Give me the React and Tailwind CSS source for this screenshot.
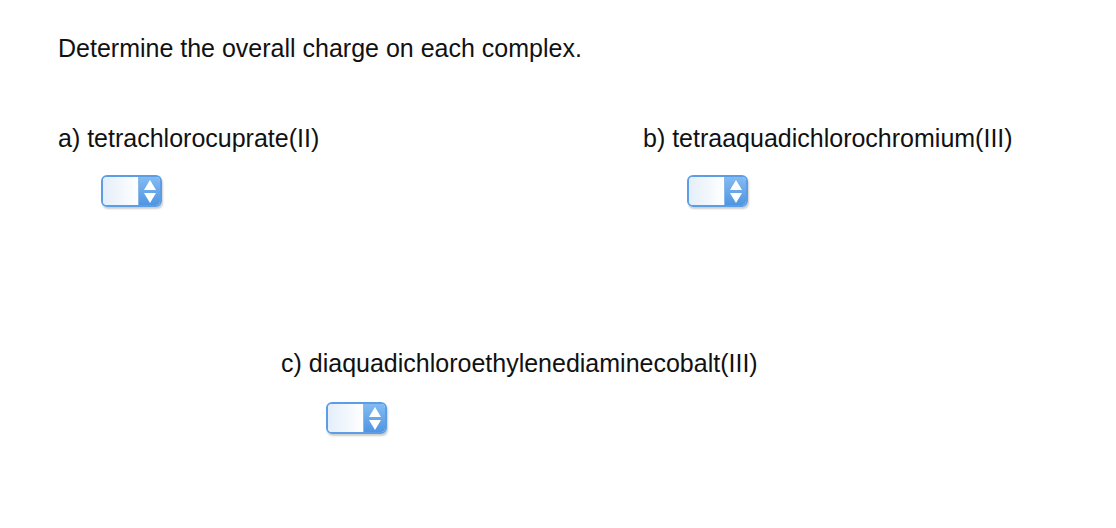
import React from "react";

function Spinner() {
  return (
    <div className="flex h-[32px] w-[61px] overflow-hidden rounded-[6px] border-2 border-[#5c9ee6] shadow-[1px_2px_2px_rgba(0,0,0,0.2)]">
      <div className="flex-1 bg-gradient-to-r from-[#e4eefa] to-white border-r border-[#8bb9ea]" />
      <div className="flex w-[21px] flex-col items-center justify-center gap-[3px] bg-gradient-to-b from-[#84bbf2] to-[#4f95e2]">
        <svg width="12" height="10" viewBox="0 0 12 10"><polygon points="6,0 12,10 0,10" fill="#fff" /></svg>
        <svg width="12" height="10" viewBox="0 0 12 10"><polygon points="0,0 12,0 6,10" fill="#fff" /></svg>
      </div>
    </div>
  );
}

export default function App() {
  return (
    <div
      className="min-h-[528px] w-[1116px] bg-white pt-[33px] pl-[58px] text-[25px] leading-[30px] text-[#111]"
      style={{ fontFamily: '"Liberation Sans", Arial, sans-serif' }}
    >
      <div>Determine the overall charge on each complex.</div>
      <div className="mt-[60px] flex">
        <div className="w-[585px]">
          <div>a) tetrachlorocuprate(II)</div>
          <div className="mt-[22px] ml-[43px]">
            <Spinner />
          </div>
        </div>
        <div>
          <div>b) tetraaquadichlorochromium(III)</div>
          <div className="mt-[22px] ml-[44px]">
            <Spinner />
          </div>
        </div>
      </div>
      <div className="mt-[141px] ml-[223px]">
        <div>c) diaquadichloroethylenediaminecobalt(III)</div>
        <div className="mt-[24px] ml-[45px]">
          <Spinner />
        </div>
      </div>
    </div>
  );
}
